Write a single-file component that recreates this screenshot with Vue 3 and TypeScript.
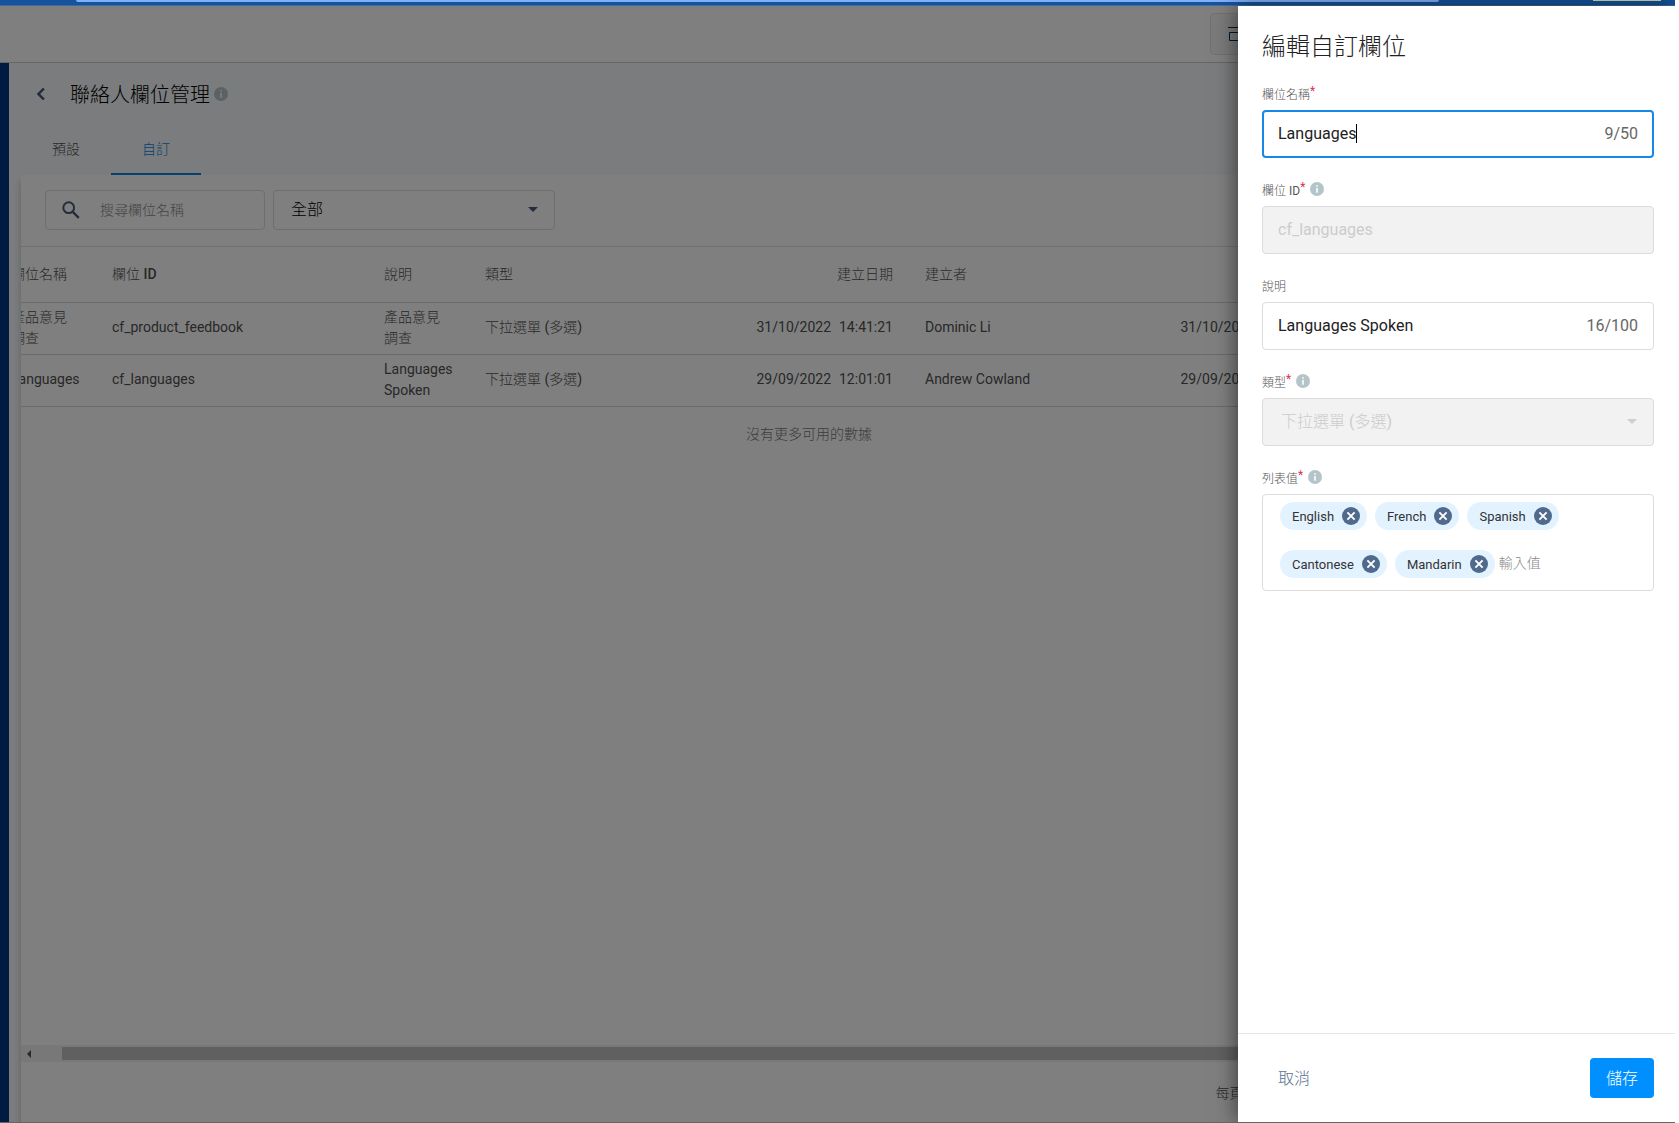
<script setup lang="ts">
import { ref } from 'vue'

interface FieldRow {
  name: string
  id: string
  description: string
  type: string
  created: [string, string]
  author: string
  updated: [string, string]
}

const rows: FieldRow[] = [
  {
    name: '產品意見調查',
    id: 'cf_product_feedbook',
    description: '產品意見調查',
    type: '下拉選單 (多選)',
    created: ['31/10/2022', '14:41:21'],
    author: 'Dominic Li',
    updated: ['31/10/2022', '14:41:21'],
  },
  {
    name: 'Languages',
    id: 'cf_languages',
    description: 'Languages Spoken',
    type: '下拉選單 (多選)',
    created: ['29/09/2022', '12:01:01'],
    author: 'Andrew Cowland',
    updated: ['29/09/2022', '12:01:01'],
  },
]

const fieldName = ref('Languages')
const fieldId = ref('cf_languages')
const description = ref('Languages Spoken')
const values = ref(['English', 'French', 'Spanish', 'Cantonese', 'Mandarin'])
const search = ref('')
const newValue = ref('')

function removeValue(index: number) {
  values.value.splice(index, 1)
}
</script>

<template>
  <div class="screen">
    <div class="browser-bar">
      <span class="address"></span>
      <span class="badge"></span>
    </div>

    <div class="app">
      <header class="topbar">
        <button type="button" class="plan-button" aria-label="方案">
          <svg viewBox="0 0 20 20" width="20" height="20" fill="none" stroke="#003366">
            <path d="M0 3.5h20M1.5 8.5h17v8h-17z" />
          </svg>
        </button>
      </header>

      <div class="body">
        <nav class="rail"></nav>
        <main class="main">
          <div class="heading">
            <button type="button" class="back" aria-label="返回">
              <svg viewBox="0 0 24 24" width="24" height="24" fill="#44597a">
                <path d="M15.4 7.4 14 6l-6 6 6 6 1.4-1.4L10.8 12z" stroke="#44597a" stroke-width=".6" />
              </svg>
            </button>
            <h1>聯絡人欄位管理</h1>
            <svg class="info" viewBox="0 0 14 14" width="14" height="14">
              <circle cx="7" cy="7" r="7" fill="#b4c5c9" />
              <path d="M6.2 3.2h1.6v1.6H6.2zM6.2 6h1.6v4.8H6.2z" fill="#fff" />
            </svg>
          </div>

          <div class="tabs" role="tablist">
            <button type="button" role="tab" class="tab">預設</button>
            <button type="button" role="tab" class="tab active" aria-selected="true">自訂</button>
          </div>

          <section class="card">
            <div class="filters">
              <label class="search">
                <svg viewBox="0 0 18 18" width="18" height="18" fill="none" stroke="#44597a" stroke-width="2">
                  <circle cx="6.7" cy="6.7" r="5.4" />
                  <path d="m10.8 10.8 6 6" stroke-width="2.4" />
                </svg>
                <input v-model="search" type="text" placeholder="搜尋欄位名稱" aria-label="搜尋欄位名稱" />
              </label>
              <div class="select-wrap filter-select">
                <select aria-label="類型">
                  <option>全部</option>
                </select>
                <svg class="arrow" viewBox="0 0 10 5" width="10" height="5"><path d="M0 0h10L5 5z" fill="#44597a" /></svg>
              </div>
            </div>

            <div class="table-area">
              <table>
                <colgroup>
                  <col class="c-name" />
                  <col class="c-id" />
                  <col class="c-desc" />
                  <col class="c-type" />
                  <col class="c-created" />
                  <col class="c-author" />
                  <col class="c-updated" />
                </colgroup>
                <thead>
                  <tr>
                    <th>欄位名稱</th>
                    <th>欄位 ID</th>
                    <th>說明</th>
                    <th>類型</th>
                    <th class="num">建立日期</th>
                    <th>建立者</th>
                    <th class="num">更新日期</th>
                  </tr>
                </thead>
                <tbody>
                  <tr v-for="row in rows" :key="row.id">
                    <td>{{ row.name }}</td>
                    <td>{{ row.id }}</td>
                    <td>{{ row.description }}</td>
                    <td>{{ row.type }}</td>
                    <td class="num"><span class="stamp"><span>{{ row.created[0] }}</span><span>{{ row.created[1] }}</span></span></td>
                    <td>{{ row.author }}</td>
                    <td class="num"><span class="stamp"><span>{{ row.updated[0] }}</span><span>{{ row.updated[1] }}</span></span></td>
                  </tr>
                </tbody>
              </table>
              <p class="empty">沒有更多可用的數據</p>
            </div>

            <div class="scrollbar">
              <svg viewBox="0 0 4 8" width="4" height="8"><path d="M4 0v8L0 4z" fill="#505050" /></svg>
              <div class="thumb"></div>
            </div>
            <footer class="pager"><span>每頁行數:</span></footer>
          </section>
        </main>
      </div>
      <div class="backdrop"></div>
    </div>

    <aside class="drawer" role="dialog" aria-labelledby="drawer-title">
      <form id="field-form" class="form" @submit.prevent>
        <h2 id="drawer-title">編輯自訂欄位</h2>

        <div class="group">
          <div class="label"><label for="f-name">欄位名稱</label><span class="req">*</span></div>
          <div class="box focused">
            <input id="f-name" v-model="fieldName" class="fit" type="text" maxlength="50" />
            <span class="cursor"></span>
            <span class="count">{{ fieldName.length }}/50</span>
          </div>
        </div>

        <div class="group">
          <div class="label">
            <label for="f-id">欄位 ID</label><span class="req">*</span>
            <svg class="info" viewBox="0 0 14 14" width="14" height="14">
              <circle cx="7" cy="7" r="7" fill="#b4c5c9" />
              <path d="M6.2 3.2h1.6v1.6H6.2zM6.2 6h1.6v4.8H6.2z" fill="#fff" />
            </svg>
          </div>
          <div class="box disabled"><input id="f-id" v-model="fieldId" type="text" disabled /></div>
        </div>

        <div class="group">
          <div class="label"><label for="f-desc">說明</label></div>
          <div class="box">
            <input id="f-desc" v-model="description" type="text" maxlength="100" />
            <span class="count">{{ description.length }}/100</span>
          </div>
        </div>

        <div class="group">
          <div class="label">
            <label for="f-type">類型</label><span class="req">*</span>
            <svg class="info" viewBox="0 0 14 14" width="14" height="14">
              <circle cx="7" cy="7" r="7" fill="#b4c5c9" />
              <path d="M6.2 3.2h1.6v1.6H6.2zM6.2 6h1.6v4.8H6.2z" fill="#fff" />
            </svg>
          </div>
          <div class="select-wrap box type-select disabled">
            <select id="f-type" disabled>
              <option>下拉選單 (多選)</option>
            </select>
            <svg class="arrow" viewBox="0 0 10 5" width="10" height="5"><path d="M0 0h10L5 5z" fill="#cfcfcf" /></svg>
          </div>
        </div>

        <div class="group">
          <div class="label">
            <label for="f-values">列表值</label><span class="req">*</span>
            <svg class="info" viewBox="0 0 14 14" width="14" height="14">
              <circle cx="7" cy="7" r="7" fill="#b4c5c9" />
              <path d="M6.2 3.2h1.6v1.6H6.2zM6.2 6h1.6v4.8H6.2z" fill="#fff" />
            </svg>
          </div>
          <div class="chips">
            <span v-for="(value, i) in values" :key="value" class="chip">
              {{ value }}
              <button type="button" :aria-label="'移除 ' + value" @click="removeValue(i)">
                <svg viewBox="0 0 18 18" width="18" height="18">
                  <circle cx="9" cy="9" r="9" fill="#4f6a8c" />
                  <path d="m5.4 5.4 7.2 7.2m0-7.2-7.2 7.2" stroke="#fff" stroke-width="1.9" />
                </svg>
              </button>
            </span>
            <input id="f-values" v-model="newValue" type="text" placeholder="輸入值" />
          </div>
        </div>
      </form>

      <footer class="actions">
        <button type="button" class="cancel">取消</button>
        <button type="submit" form="field-form" class="save">儲存</button>
      </footer>
    </aside>
  </div>
</template>

<style>
body {
  margin: 0;
  background: #fff;
}
</style>

<style scoped>
* {
  box-sizing: border-box;
}

.screen {
  position: relative;
  display: flex;
  flex-direction: column;
  height: 100vh;
  margin-right: 4px;
  overflow: hidden;
  border-bottom: 1px solid #666;
  font-family: Roboto, "Noto Sans CJK TC Light", "Noto Sans CJK TC", sans-serif;
  font-size: 14px;
  color: #505050;
}

button,
input,
select {
  margin: 0;
  padding: 0;
  border: 0;
  outline: 0;
  background: none;
  font: inherit;
  color: inherit;
}

select {
  appearance: none;
}

.browser-bar {
  display: flex;
  justify-content: space-between;
  flex: none;
  height: 6px;
  padding: 0 14px 0 76px;
  background: #15539c;
  border-bottom: 1px solid #44699c;
}

.address {
  width: 86%;
  height: 2px;
  background: #80b0fa;
  border-radius: 0 0 8px 8px;
}

.badge {
  width: 68px;
  height: 1px;
  background: #d3dfb0;
}

.app {
  position: relative;
  display: flex;
  flex-direction: column;
  flex: 1;
  min-height: 0;
  background: #fff;
}

.backdrop {
  position: absolute;
  inset: 0;
  background: rgba(0, 0, 0, .5);
}

.topbar {
  display: flex;
  justify-content: flex-end;
  align-items: center;
  flex: none;
  height: 57px;
  padding-right: 325px;
  border-bottom: 1px solid #ccc;
}

.plan-button {
  display: flex;
  align-items: center;
  width: 140px;
  height: 42px;
  padding: 0 17px;
  border: 1px solid #e2e2e2;
  border-radius: 4px;
  background: #f6f6f6;
}

.body {
  display: flex;
  flex: 1;
  min-height: 0;
}

.rail {
  width: 9px;
  background: #003684;
}

.main {
  display: flex;
  flex-direction: column;
  flex: 1;
  min-width: 0;
  padding-left: 12px;
  background: #f5f8fa;
}

.heading {
  display: flex;
  align-items: center;
  height: 62px;
  padding-left: 8px;
}

.back {
  display: flex;
  margin-right: 17px;
}

h1 {
  margin: 0 4px 0 0;
  padding-top: 2px;
  font-size: 20px;
  font-weight: 300;
  line-height: 28px;
  color: #000;
}

.info {
  flex: none;
}

.tabs {
  display: flex;
}

.tab {
  width: 90px;
  height: 50px;
  padding-bottom: 2px;
  border-bottom: 2px solid transparent;
}

.tab.active {
  color: #0b80e0;
  border-bottom-color: #0b80e0;
}

.card {
  display: flex;
  flex-direction: column;
  flex: 1;
  min-height: 0;
  background: #fff;
  box-shadow: -1px 6px 6px rgba(0, 0, 0, .16);
}

.filters {
  display: flex;
  gap: 8px;
  padding: 15px 24px 16px;
}

.search {
  display: flex;
  align-items: center;
  gap: 20px;
  width: 220px;
  height: 40px;
  padding: 0 16px;
  border: 1px solid #dcdcdc;
  border-radius: 4px;
}

.search input {
  flex: 1;
  min-width: 0;
}

.search svg {
  flex: none;
}

input::placeholder {
  color: #888;
  opacity: 1;
}

.select-wrap {
  display: flex;
  align-items: center;
  font-size: 16px;
}

.select-wrap select {
  flex: 1;
}

.filter-select {
  width: 282px;
  height: 40px;
  padding: 0 16px 2px;
  border: 1px solid #dcdcdc;
  border-radius: 4px;
  color: #000;
}

.filter-select select {
  padding-left: 1px;
}

.arrow {
  flex: none;
}

.table-area {
  flex: 1;
  min-height: 0;
  overflow: hidden;
}

table {
  width: 1338px;
  margin-left: -26px;
  border-collapse: collapse;
  table-layout: fixed;
  line-height: 21px;
}

.c-name {
  width: 101px;
}

.c-id {
  width: 272px;
}

.c-desc {
  width: 101px;
}

.c-type {
  width: 176px;
}

.c-created {
  width: 264px;
}

.c-author {
  width: 224px;
}

.c-updated {
  width: 200px;
}

th,
td {
  height: 52px;
  padding: 0 16px 2px;
  border-bottom: 1px solid #d6d6d6;
  text-align: left;
}

th {
  height: 56px;
  padding-bottom: 0;
  border-top: 1px solid #e0e0e0;
  font-weight: 500;
}

.num {
  text-align: right;
}

.stamp {
  display: inline-flex;
  gap: 8px;
}

.empty {
  width: 1576px;
  margin: 17px 0 0;
  line-height: 20px;
  text-align: center;
  color: #777;
}

.scrollbar {
  display: flex;
  align-items: center;
  flex: none;
  gap: 31px;
  height: 17px;
  padding-left: 6px;
  background: #f1f1f1;
}

.thumb {
  flex: 1;
  height: 13px;
  background: #c1c1c1;
}

.pager {
  display: flex;
  justify-content: flex-end;
  align-items: center;
  flex: none;
  height: 60px;
  padding-right: 400px;
}

.drawer {
  position: absolute;
  top: 6px;
  right: 0;
  bottom: 0;
  display: flex;
  flex-direction: column;
  width: 437px;
  background: #fff;
  box-shadow: -2px 0 20px rgba(0, 0, 0, .5);
}

.form {
  flex: 1;
  padding: 23px 21px 0 24px;
}

h2 {
  margin: 0 0 20px;
  font-size: 24px;
  font-weight: 300;
  line-height: 36px;
  color: #222;
}

.group {
  margin-bottom: 23px;
}

.label {
  display: flex;
  align-items: center;
  height: 16px;
  margin-bottom: 9px;
  font-size: 12px;
  color: #555;
}

.label .info {
  margin-left: 5px;
}

.req {
  align-self: flex-start;
  line-height: 12px;
  color: #e0304f;
}

.box {
  display: flex;
  align-items: center;
  height: 48px;
  padding: 0 15px 2px;
  border: 1px solid #dcdcdc;
  border-radius: 4px;
  font-size: 16px;
  color: #222;
}

.box input {
  flex: 1;
  min-width: 0;
}

.box .fit {
  flex: none;
  field-sizing: content;
}

.focused {
  padding: 0 14px 2px;
  border: 2px solid #1788e8;
}

.cursor {
  width: 1px;
  height: 19px;
  background: #000;
}

.count {
  margin-left: auto;
  color: #666;
}

.disabled {
  background: #f2f2f2;
  color: #ccc;
}

.disabled select {
  opacity: 1;
}

.type-select {
  padding: 0 16px 2px 18px;
}

.chips {
  display: flex;
  flex-wrap: wrap;
  align-items: center;
  gap: 20px 8px;
  padding: 7px 17px 12px;
  border: 1px solid #dcdcdc;
  border-radius: 4px;
}

.chip {
  display: flex;
  align-items: center;
  gap: 8px;
  height: 28px;
  padding: 0 7px 0 12px;
  border-radius: 14px;
  background: #e3f2ff;
  font-size: 13px;
  color: #333;
}

.chip button {
  display: flex;
}

.chips input {
  width: 60px;
  margin-left: -4px;
  padding-bottom: 2px;
}

.actions {
  display: flex;
  justify-content: space-between;
  align-items: center;
  height: 89px;
  padding: 0 21px 0 24px;
  border-top: 1px solid #e6e6e6;
}

.actions button {
  height: 40px;
  padding: 0 16px 2px;
  border-radius: 4px;
  font-size: 16px;
}

.cancel {
  color: #5a6f8f;
}

.save {
  background: #008fff;
  color: #fff;
}
</style>
